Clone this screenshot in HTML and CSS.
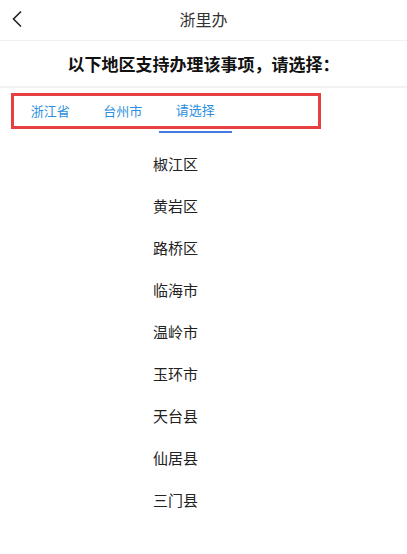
FILE: index.html
```html
<!DOCTYPE html>
<html lang="zh-CN">
<head>
<meta charset="utf-8">
<title>浙里办</title>
<link rel="stylesheet" href="styles.css">
</head>
<body>
<div class="page">
  <header class="nav">
    <svg class="back" width="12" height="18" viewBox="0 0 12 18"><path d="M10 1.5 L2.5 9 L10 16.5" fill="none" stroke="#222" stroke-width="1.6"/></svg>
    <span class="nav-title">浙里办</span>
  </header>
  <div class="subtitle">以下地区支持办理该事项，请选择：</div>
  <div class="tabs-wrap">
    <div class="tabs">
      <div class="tab">浙江省</div>
      <div class="tab">台州市</div>
      <div class="tab active">请选择</div>
    </div>
    <div class="highlight"></div>
  </div>
  <ul class="list">
    <li>椒江区</li>
    <li>黄岩区</li>
    <li>路桥区</li>
    <li>临海市</li>
    <li>温岭市</li>
    <li>玉环市</li>
    <li>天台县</li>
    <li>仙居县</li>
    <li>三门县</li>
  </ul>
</div>
</body>
</html>
```

FILE: styles.css
```css
* { box-sizing: border-box; }
html, body { margin: 0; padding: 0; background: #fff; }
body {
  font-family: "Noto Sans CJK SC", "Noto Sans", sans-serif;
  color: #222;
  width: 407px;
  height: 554px;
  overflow: hidden;
}
.nav {
  position: relative;
  height: 41px;
  display: flex;
  align-items: center;
  justify-content: center;
  border-bottom: 1px solid #f0f0f0;
}
.back {
  position: absolute;
  left: 11px;
  top: 10px;
}
.nav-title {
  font-size: 16px;
  color: #333;
  line-height: 20px;
  margin-top: -2px;
}
.subtitle {
  height: 47px;
  display: flex;
  align-items: center;
  justify-content: center;
  font-size: 17px;
  font-weight: bold;
  color: #111;
  border-bottom: 2px solid #f2f2f2;
  padding-bottom: 1px;
}
.tabs-wrap {
  position: relative;
  height: 46px;
}
.tabs {
  display: flex;
  padding-left: 14px;
}
.tab {
  width: 72.5px;
  height: 45px;
  display: flex;
  align-items: center;
  justify-content: center;
  font-size: 13px;
  color: #2d8fe0;
  padding-bottom: 1px;
}
.tab.active {
  border-bottom: 2px solid #4a78e0;
}
.highlight {
  position: absolute;
  left: 11px;
  top: 5px;
  width: 310px;
  height: 36px;
  border: 3px solid #e84040;
}
.list {
  list-style: none;
  margin: 0;
  padding: 8px 0 0 153px;
}
.list li {
  height: 42px;
  display: flex;
  align-items: center;
  font-size: 15px;
  color: #222;
}
```
